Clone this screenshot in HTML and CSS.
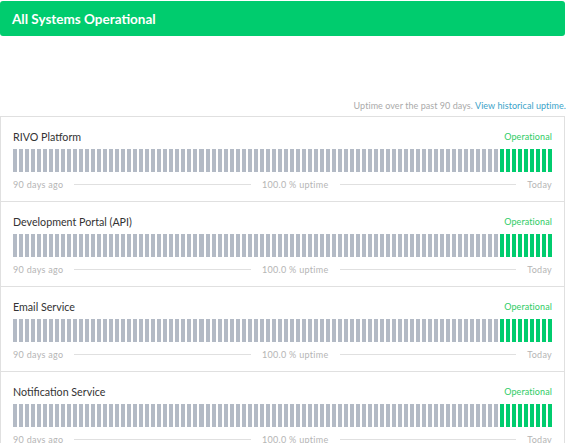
FILE: index.html
```html
<!DOCTYPE html>
<html lang="en">
<head>
    <meta charset="UTF-8">
    <meta name="viewport" content="width=device-width, initial-scale=1.0">
    <title>RIVO Status</title>
    <link rel="stylesheet" href="styles.css">
</head>
<body>
    <div class="page-status">
        <span class="status-text">All Systems Operational</span>
    </div>

    <div class="uptime-note">
        Uptime over the past 90 days. <a href="#" class="history-link">View historical uptime.</a>
    </div>

    <div class="components">
        <div class="component">
            <div class="component-head">
                <span class="name">RIVO Platform</span>
                <span class="state">Operational</span>
            </div>
            <div class="uptime-bars"></div>
            <div class="timeline">
                <span>90 days ago</span>
                <span class="spacer"></span>
                <span>100.0 % uptime</span>
                <span class="spacer"></span>
                <span>Today</span>
            </div>
        </div>
        <div class="component">
            <div class="component-head">
                <span class="name">Development Portal (API)</span>
                <span class="state">Operational</span>
            </div>
            <div class="uptime-bars"></div>
            <div class="timeline">
                <span>90 days ago</span>
                <span class="spacer"></span>
                <span>100.0 % uptime</span>
                <span class="spacer"></span>
                <span>Today</span>
            </div>
        </div>
        <div class="component">
            <div class="component-head">
                <span class="name">Email Service</span>
                <span class="state">Operational</span>
            </div>
            <div class="uptime-bars"></div>
            <div class="timeline">
                <span>90 days ago</span>
                <span class="spacer"></span>
                <span>100.0 % uptime</span>
                <span class="spacer"></span>
                <span>Today</span>
            </div>
        </div>
        <div class="component">
            <div class="component-head">
                <span class="name">Notification Service</span>
                <span class="state">Operational</span>
            </div>
            <div class="uptime-bars"></div>
            <div class="timeline">
                <span>90 days ago</span>
                <span class="spacer"></span>
                <span>100.0 % uptime</span>
                <span class="spacer"></span>
                <span>Today</span>
            </div>
        </div>
    </div>

    <script>
        // 90 days of history, only the last 9 have data
        const DAYS = 90;
        const TRACKED = 9;

        document.querySelectorAll('.uptime-bars').forEach(bars => {
            for (let i = 0; i < DAYS; i++) {
                const day = document.createElement('div');
                day.className = i >= DAYS - TRACKED ? 'day up' : 'day';
                bars.appendChild(day);
            }
        });
    </script>
</body>
</html>
```

FILE: styles.css
```css
body {
    margin: 0;
    font-family: Lato, "Open Sans", sans-serif;
    background-color: #fff;
    color: #333;
    width: 566px;
}
.page-status {
    height: 35px;
    margin-top: 1px;
    margin-right: 1px;
    padding: 0 12px;
    display: flex;
    align-items: center;
    background-color: #00cc6e;
    border-radius: 3px;
    color: #fff;
    font-size: 13.5px;
    font-weight: 700;
}
.uptime-note {
    margin-top: 64px;
    margin-bottom: 4px;
    text-align: right;
    font-size: 9px;
    line-height: 12px;
    letter-spacing: 0.05px;
    color: #aaa;
}
.history-link {
    color: #3aa3c9;
    text-decoration: none;
}
.components {
    margin-right: 1px;
    border: 1px solid #e0e0e0;
    border-bottom: none;
}
.component {
    padding: 12px 12px 9px;
    border-bottom: 1px solid #e0e0e0;
}
.component-head {
    display: flex;
    justify-content: space-between;
    align-items: center;
    height: 14px;
}
.name {
    font-size: 10.7px;
    color: #333;
}
.state {
    font-size: 9px;
    letter-spacing: 0.1px;
    color: #2fcc66;
}
.uptime-bars {
    display: flex;
    gap: 2px;
    height: 23px;
    margin-top: 6px;
}
.day {
    flex: 1;
    background-color: #b3bac5;
}
.day.up {
    background-color: #00cc6e;
}
.timeline {
    display: flex;
    align-items: center;
    height: 15px;
    margin-top: 5px;
    font-size: 9px;
    letter-spacing: 0.3px;
    color: #b5b5b5;
}
.spacer {
    flex: 1;
    height: 1px;
    margin: 0 11px;
    background-color: #e0e0e0;
}
```
